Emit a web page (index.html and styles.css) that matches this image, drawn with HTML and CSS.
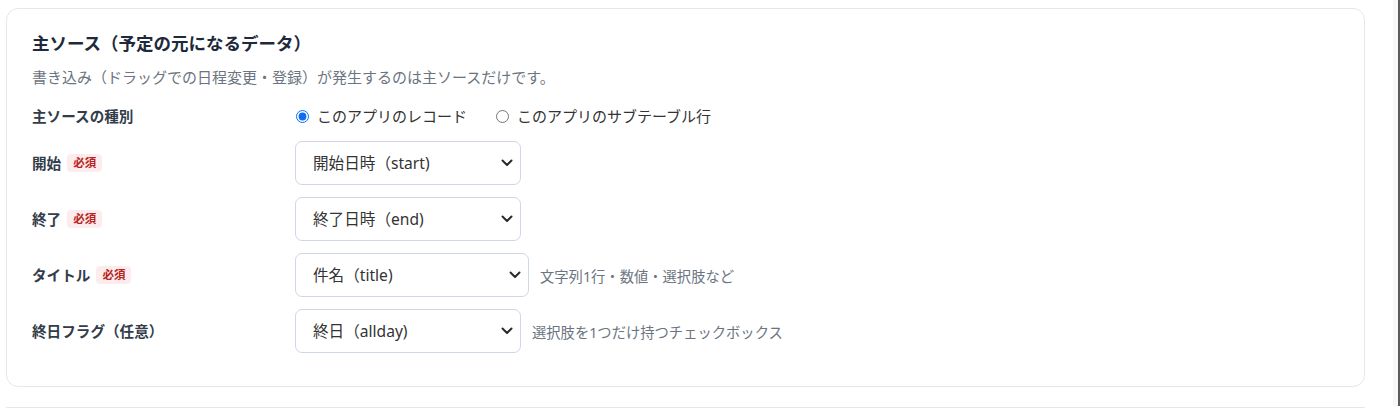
FILE: index.html
```html
<!DOCTYPE html>
<html lang="ja">
<head>
<meta charset="utf-8">
<title>主ソース</title>
<link rel="stylesheet" href="styles.css">
</head>
<body>
<div class="page">
  <div class="main">
    <section class="card">
      <h2 class="card-title">主ソース（予定の元になるデータ）</h2>
      <p class="card-desc">書き込み（ドラッグでの日程変更・登録）が発生するのは主ソースだけです。</p>
      <div class="form">
        <div class="label">主ソースの種別</div>
        <div class="control radios">
          <label class="radio"><input type="radio" name="src" checked><span>このアプリのレコード</span></label>
          <label class="radio"><input type="radio" name="src"><span>このアプリのサブテーブル行</span></label>
        </div>

        <div class="label">開始<span class="badge">必須</span></div>
        <div class="control">
          <span class="select-wrap w226">
            <select class="select"><option>開始日時（start)</option></select>
            <svg class="chev" viewBox="0 0 12 8" width="12" height="8"><path d="M1.5 1.5 L6 6 L10.5 1.5" fill="none" stroke="#2b2b2b" stroke-width="2" stroke-linecap="round" stroke-linejoin="round"/></svg>
          </span>
        </div>

        <div class="label">終了<span class="badge">必須</span></div>
        <div class="control">
          <span class="select-wrap w226">
            <select class="select"><option>終了日時（end)</option></select>
            <svg class="chev" viewBox="0 0 12 8" width="12" height="8"><path d="M1.5 1.5 L6 6 L10.5 1.5" fill="none" stroke="#2b2b2b" stroke-width="2" stroke-linecap="round" stroke-linejoin="round"/></svg>
          </span>
        </div>

        <div class="label">タイトル<span class="badge">必須</span></div>
        <div class="control">
          <span class="select-wrap w234">
            <select class="select"><option>件名（title)</option></select>
            <svg class="chev" viewBox="0 0 12 8" width="12" height="8"><path d="M1.5 1.5 L6 6 L10.5 1.5" fill="none" stroke="#2b2b2b" stroke-width="2" stroke-linecap="round" stroke-linejoin="round"/></svg>
          </span>
          <span class="hint">文字列1行・数値・選択肢など</span>
        </div>

        <div class="label">終日フラグ（任意）</div>
        <div class="control">
          <span class="select-wrap w226">
            <select class="select"><option>終日（allday)</option></select>
            <svg class="chev" viewBox="0 0 12 8" width="12" height="8"><path d="M1.5 1.5 L6 6 L10.5 1.5" fill="none" stroke="#2b2b2b" stroke-width="2" stroke-linecap="round" stroke-linejoin="round"/></svg>
          </span>
          <span class="hint">選択肢を1つだけ持つチェックボックス</span>
        </div>
      </div>
    </section>
    <section class="card card-next"></section>
  </div>
  <div class="side"></div>
</div>
</body>
</html>
```

FILE: styles.css
```css
* { box-sizing: border-box; }
html, body { margin: 0; padding: 0; background: #fff; }
body {
  font-family: "Noto Sans", "Noto Sans CJK JP", sans-serif;
  color: #333d4a;
  height: 409px;
  overflow: hidden;
}
.page {
  display: flex;
  height: 409px;
  overflow: hidden;
}
.main {
  flex: 1;
  height: 409px;
  overflow: hidden;
  padding: 8px 28px 0 6px;
}
.side {
  width: 7px;
  background: #f8f8f8;
  border-right: 2px solid #5c5c5c;
  height: 406px;
}
.card {
  border: 1px solid #e2e8f0;
  border-radius: 12px;
  padding: 22px 24px 33px 25px;
  background: #fff;
}
.card-next {
  margin-top: 20px;
  height: 1px;
  padding: 0;
  border-bottom: none;
  border-radius: 12px 12px 0 0;
}
.card-title {
  margin: 0;
  font-size: 17.5px;
  line-height: 24px;
  font-weight: 700;
  color: #1e2a3b;
}
.card-desc {
  margin: 12px 0 0;
  font-size: 15px;
  line-height: 20px;
  color: #6b7480;
}
.form {
  margin-top: 16px;
  display: grid;
  grid-template-columns: 263px 1fr;
  row-gap: 12px;
  align-items: center;
}
.label {
  display: flex;
  align-items: center;
  font-size: 14.6px;
  font-weight: 700;
  color: #333d4a;
  line-height: 20px;
}
.badge {
  display: inline-flex;
  align-items: center;
  margin-left: 6px;
  height: 18px;
  padding: 0 6px;
  border-radius: 4px;
  background: #fdeced;
  color: #b8231b;
  font-size: 11.5px;
  font-weight: 700;
}
.control {
  display: flex;
  align-items: center;
}
.radios {
  min-height: 26px;
  gap: 28px;
}
.radio {
  display: inline-flex;
  align-items: center;
  font-size: 15px;
  color: #333;
  line-height: 22px;
}
.radio input {
  margin: 0 8px 0 1px;
  width: 13px;
  height: 13px;
  accent-color: #0b6ef5;
}
.select-wrap {
  position: relative;
  display: inline-block;
  height: 44px;
}
.w226 { width: 226px; }
.w234 { width: 234px; }
.select {
  appearance: none;
  -webkit-appearance: none;
  width: 100%;
  height: 44px;
  border: 1px solid #cfd8e4;
  border-radius: 7px;
  background: #fff;
  padding: 0 34px 0 17px;
  font-family: "Noto Sans", "Noto Sans CJK JP", sans-serif;
  font-size: 15.6px;
  color: #333;
  outline: none;
}
.chev {
  position: absolute;
  right: 8px;
  top: 18px;
  pointer-events: none;
}
.hint {
  margin-left: 11px;
  font-size: 14.3px;
  color: #6b7480;
}
```
